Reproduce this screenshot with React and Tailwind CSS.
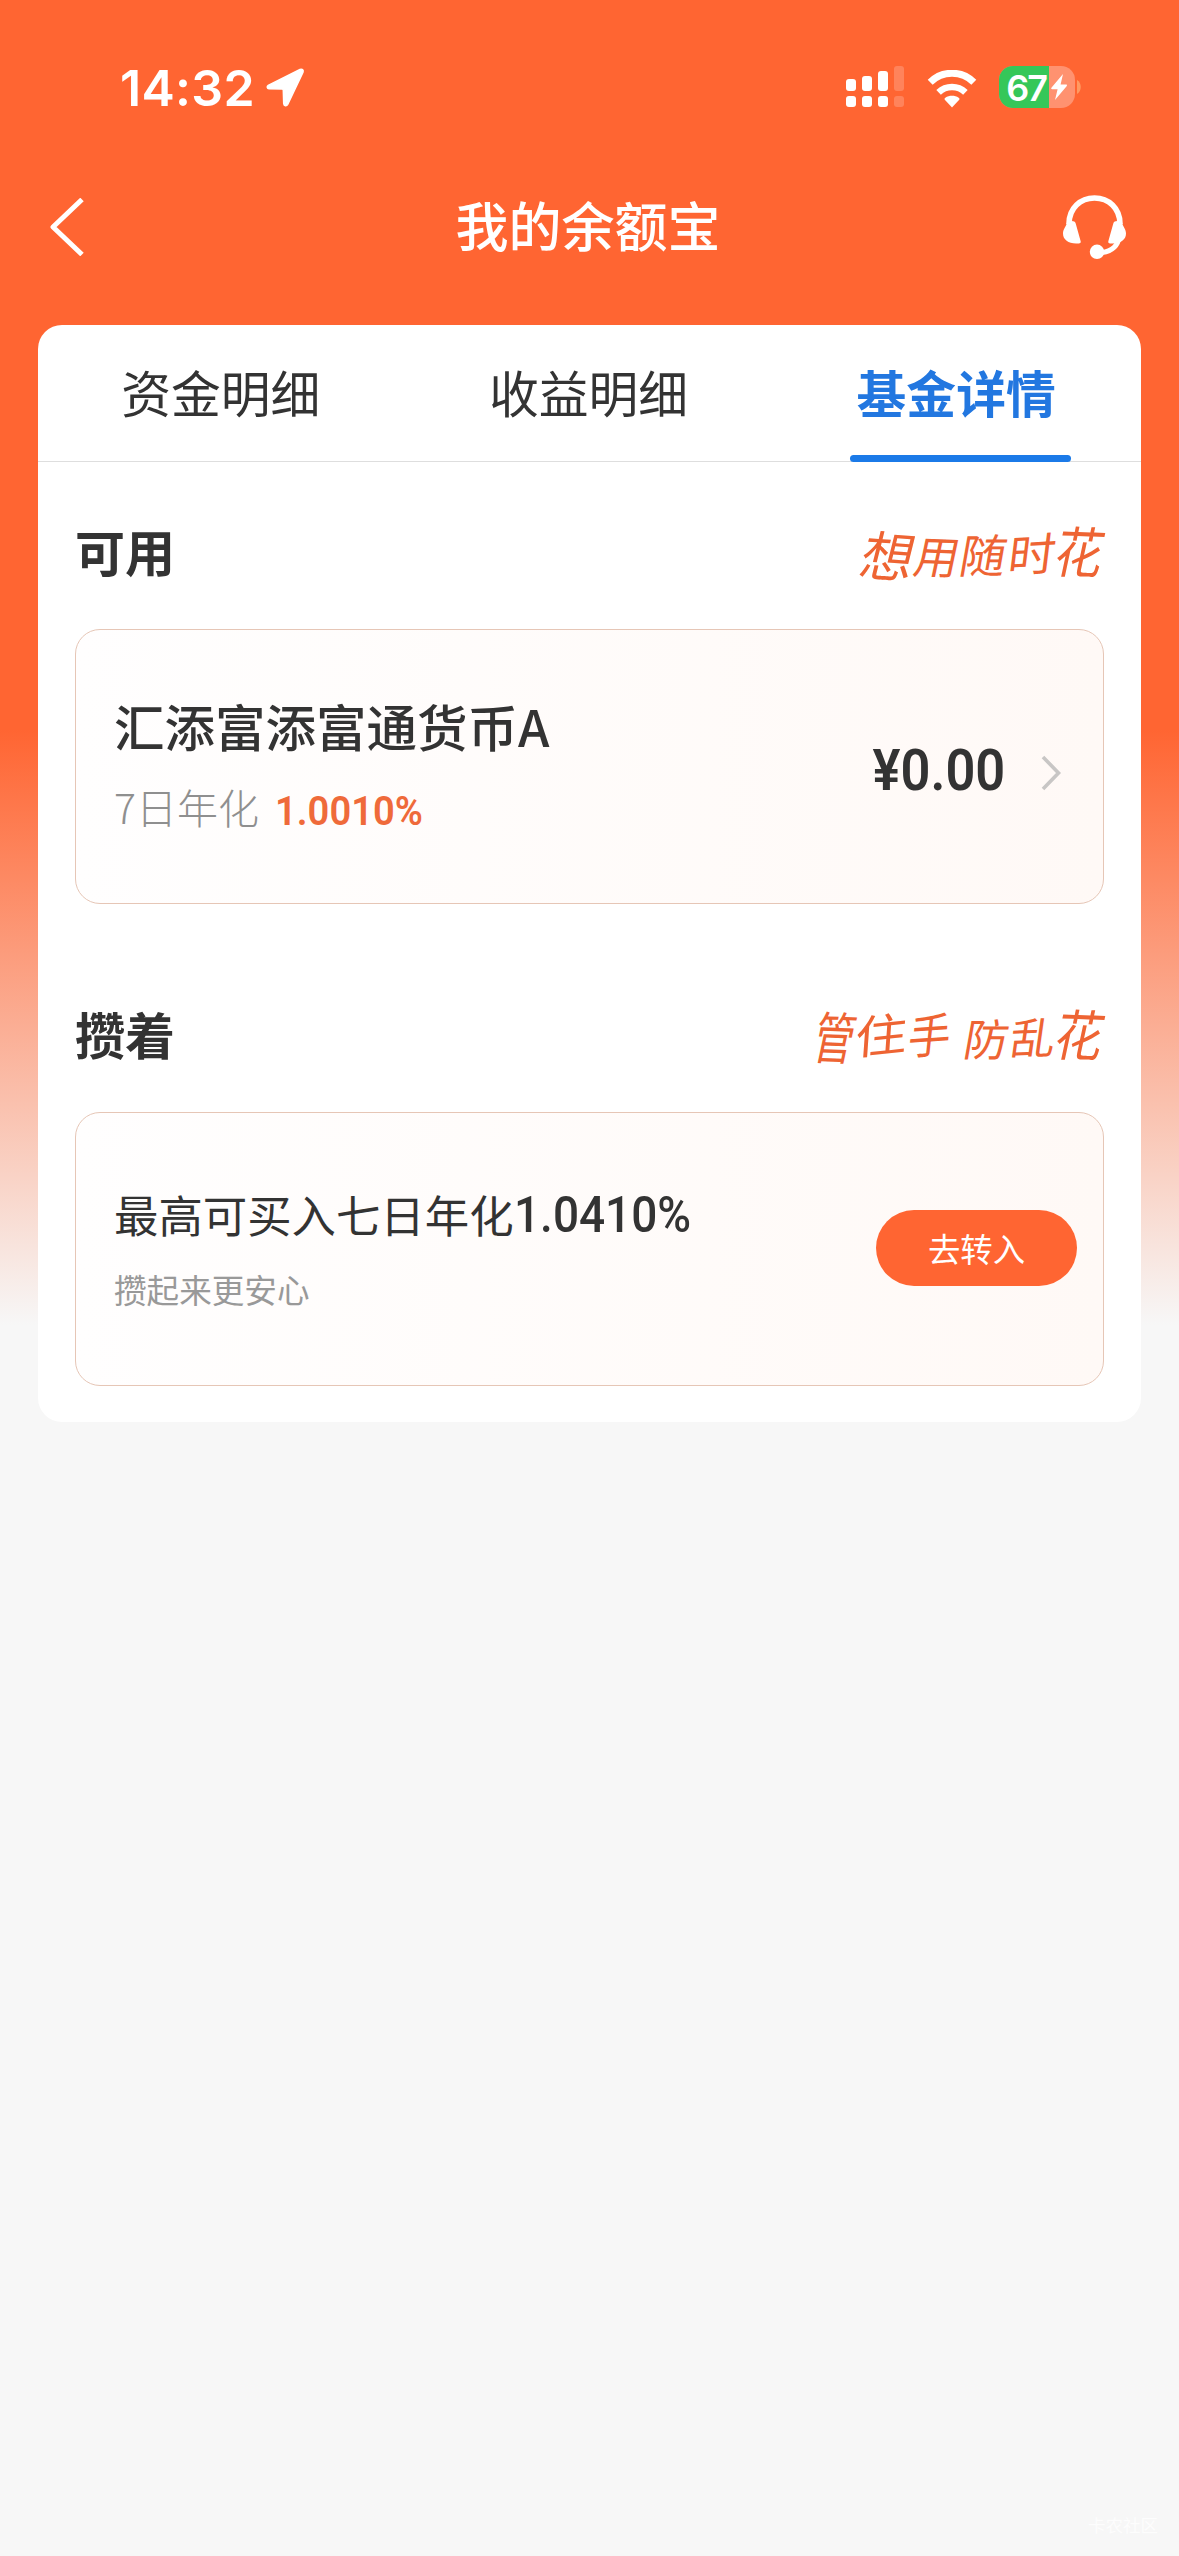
import React from "react";

const cjk = "font-['Noto_Sans_CJK_SC','Noto_Sans',sans-serif]";

function LocationArrow() {
  return (
    <svg width="40" height="41" viewBox="0 0 40 41" fill="#fff">
      <path
        d="M35 2.5 3.2 18.3C1.6 19.2 2 21.6 4 21.7L17.2 22.1C18 22.1 18.3 22.5 18.3 23.2L18.7 36.6C18.8 39.2 21.6 39.6 22.7 37.5L38 5.2C38.8 3 37 1.5 35 2.5Z"
        stroke="#fff"
        strokeWidth="1.5"
      />
    </svg>
  );
}

function Signal() {
  return (
    <svg width="60" height="44" viewBox="0 0 60 44" fill="#fff">
      <rect x="0" y="15" width="10" height="12" rx="3" />
      <rect x="16" y="12" width="10" height="15" rx="3" />
      <rect x="32" y="7" width="10" height="20" rx="3" />
      <rect x="48" y="2" width="10" height="25" rx="3" opacity=".2" />
      <rect x="0" y="32" width="10" height="11" rx="3" />
      <rect x="16" y="32" width="10" height="11" rx="3" />
      <rect x="32" y="32" width="10" height="11" rx="3" />
      <rect x="48" y="32" width="10" height="11" rx="3" opacity=".2" />
    </svg>
  );
}

function Wifi() {
  return (
    <svg width="50" height="38" viewBox="0 0 50 38" fill="none">
      <path d="M3.2 12.2A31 31 0 0 1 46.8 12.2" stroke="#fff" strokeWidth="7" />
      <path d="M11.6 22.3A19.5 19.5 0 0 1 38.4 22.3" stroke="#fff" strokeWidth="6.6" />
      <path d="M25 37.5 18 30C17.3 29.2 17.4 28.3 18.3 27.7 22.3 25.1 27.7 25.1 31.7 27.7 32.6 28.3 32.7 29.2 32 30Z" fill="#fff" />
    </svg>
  );
}

function Battery() {
  return (
    <div className="flex items-center">
      <div className="flex h-[42px] w-[76px] items-center overflow-hidden rounded-[14px] bg-[#ff9270]">
        <div className="flex h-full w-[50px] items-center justify-end bg-[#35c759] pr-[3px] pt-px font-['Inter',sans-serif] text-[36px] font-semibold leading-none tracking-[-2px] text-white">
          67
        </div>
        <svg width="20" height="28" viewBox="0 0 20 28" fill="#fff">
          <path d="M14 1 2.6 14.6C1.8 15.6 2.2 16.3 3.2 16.3H8.6L6 27 17.6 13.2C18.3 12.3 18 11.6 17 11.6H11.6Z" />
        </svg>
      </div>
      <svg className="ml-[2px]" width="4" height="14" viewBox="0 0 4 14">
        <path d="M0 0C5 3 5 11 0 14Z" fill="#ff9a62" />
      </svg>
    </div>
  );
}

function Headset() {
  return (
    <svg width="66" height="66" viewBox="0 0 66 66" fill="none">
      <path d="M7 30C7 14 18.5 4 32.5 4S58 14 58 30" stroke="#fff" strokeWidth="5.6" />
      <path d="M7 27.5C10 26.5 13 27 13.7 29.5L18.6 47C19.2 49.3 17.8 49.5 15.5 49.5 7 50 1 46 1 39.5 1 35 4 33 5 28.5Z" fill="#fff" />
      <path d="M58 27.5C55 26.5 52 27 51.3 29.5L46.4 47C45.8 49.3 47.2 49.5 49.5 49.5 58 50 64 46 64 39.5 64 35 61 33 60 28.5Z" fill="#fff" />
      <path d="M56.5 46C54 54.5 47 58.3 36 59" stroke="#fff" strokeWidth="5" />
      <circle cx="35" cy="57.8" r="7.2" fill="#fff" />
    </svg>
  );
}

function Slogan({ chars }) {
  return (
    <div className="flex h-[60px] items-start font-['Noto_Sans_CJK_SC',sans-serif] font-normal text-[#ee6433]">
      {chars.map(([ch, width, size, top, sx, rot], i) => (
        <span
          key={i}
          className="flex justify-center leading-none"
          style={{
            width,
            fontSize: size,
            marginTop: top,
            transform: `rotate(${rot}deg) skewX(-10deg) scaleX(${sx})`,
          }}
        >
          {ch}
        </span>
      ))}
    </div>
  );
}

function Tab({ label, active }) {
  return (
    <div
      className={
        active
          ? "relative flex flex-1 justify-center pr-[2px] pt-[29px] text-[49.8px] font-bold leading-[74px] text-[#2277e0]"
          : "flex flex-1 justify-center pr-[2px] pt-[29px] text-[49.8px] font-normal leading-[74px] text-[#333]"
      }
    >
      {label}
      {active && <span className="absolute -bottom-px left-[77px] h-[7px] w-[221px] rounded-full bg-[#1b7ae8]" />}
    </div>
  );
}

const cardBox =
  "flex justify-between rounded-[25px] border border-[#e6c6b6] bg-gradient-to-r from-[#fffefe] to-[#fff9f6]";

export default function App() {
  return (
    <div
      className={`${cjk} flex h-[2556px] w-[1179px] flex-col overflow-hidden bg-[#f7f7f7] bg-[linear-gradient(180deg,#ff6532_0px,#ff6532_730px,#f7f7f7_1325px)]`}
    >
      <header className="flex h-[325px] flex-col text-white">
        <div className="flex h-[108px] items-end justify-between pl-[120px] pr-[98px]">
          <div className="flex items-end">
            <span className="w-[145px] font-['Inter',sans-serif] text-[50px] font-semibold leading-[40px] tracking-[0.3px]">14:32</span>
            <LocationArrow />
          </div>
          <div className="flex items-end">
            <Signal />
            <div className="ml-[21px]"><Wifi /></div>
            <div className="ml-[22px]"><Battery /></div>
          </div>
        </div>
        <div className="mt-[79px] flex h-[80px] items-center justify-between pl-[48px] pr-[51px]">
          <svg width="80" height="58" viewBox="0 0 80 58" fill="none">
            <path d="M34 1.5 5 29 34 56.5" stroke="#fff" strokeWidth="5" strokeLinejoin="round" />
          </svg>
          <h1 className="pb-[5px] text-[53px] font-medium leading-[75px]">我的余额宝</h1>
          <div className="flex w-[80px] justify-end"><Headset /></div>
        </div>
      </header>

      <main className="mx-[38px] flex h-[1097px] flex-col rounded-[24px] bg-white">
        <nav className="flex h-[137px] border-b border-[#dedede]">
          <Tab label="资金明细" />
          <Tab label="收益明细" />
          <Tab label="基金详情" active />
        </nav>

        <section className="px-[37px]">
          <div className="flex h-[167px] items-start justify-between">
            <h2 className="pt-[51px] text-[50px] font-bold leading-[74px] text-[#333]">可用</h2>
            <div className="pt-[60px]">
              <Slogan
                chars={[
                  ["想", 54, 54, 5, 0.98, 4],
                  ["用", 44, 45, 10, 0.98, 2],
                  ["随", 48, 46, 8, 1, 0],
                  ["时", 49, 45, 7, 1.05, -3],
                  ["花", 47, 55, 0, 0.87, 2],
                ]}
              />
            </div>
          </div>
          <div className={`${cardBox} h-[275px]`}>
            <div className="pl-[38px] pt-[58px]">
              <div className="text-[50.5px] font-medium leading-[74px] text-[#333]">汇添富添富通货币A</div>
              <div className="mt-[14px] flex items-start leading-[60px]">
                <span className="text-[41px] font-light text-[#8f8f8f]">7日年化</span>
                <span className="ml-[16px] flex w-[148px] pt-[5px] font-['Roboto',sans-serif] text-[41px] font-semibold text-[#ef6a3a]">
                  <span className="origin-left scale-x-[0.93]">1.0010%</span>
                </span>
              </div>
            </div>
            <div className="flex items-center pr-[41px] pt-[7px]">
              <span className="origin-right scale-x-[0.92] font-['Roboto',sans-serif] text-[57px] font-semibold leading-none text-[#333]">¥0.00</span>
              <svg className="ml-[35px] mt-[5px]" width="22" height="36" viewBox="0 0 22 36" fill="none">
                <path d="M3 2 18.5 18 3 34" stroke="#c8c6c5" strokeWidth="3.6" />
              </svg>
            </div>
          </div>
        </section>

        <section className="px-[37px]">
          <div className="flex h-[208px] items-start justify-between">
            <h2 className="pt-[92px] text-[50px] font-bold leading-[74px] text-[#333]">攒着</h2>
            <div className="pt-[101px]">
              <Slogan
                chars={[
                  ["管", 37, 56, 2, 0.72, 2],
                  ["住", 55, 45, 5, 1.15, -6],
                  ["手", 42, 47, 4, 0.9, -4],
                  ["", 13, 40, 0, 1, 0],
                  ["防", 46, 44, 10, 1, 0],
                  ["乱", 47, 43, 9, 1.05, -2],
                  ["花", 47, 55, 0, 0.87, 2],
                ]}
              />
            </div>
          </div>
          <div className={`${cardBox} h-[274px]`}>
            <div className="pl-[38px] pt-[67px]">
              <div className="flex items-baseline text-[44.4px] leading-[68px] text-[#333]">
                <span>最高可买入七日年化</span>
                <span className="w-[176px] font-['Roboto',sans-serif] text-[50.5px] font-medium">
                  <span className="inline-block origin-left -translate-y-px scale-x-[0.91]">1.0410%</span>
                </span>
              </div>
              <div className="mt-[15px] text-[32.6px] font-normal leading-[48px] text-[#999]">攒起来更安心</div>
            </div>
            <button className="mr-[26px] mt-[97px] h-[76px] w-[201px] rounded-full bg-[#ff6532] text-[32.4px] font-normal leading-[72px] text-white">
              去转入
            </button>
          </div>
        </section>
      </main>

      <footer className="mt-auto flex justify-end pb-[18px] pr-[21px] text-[17.5px] leading-[26px] text-[#fdfdfd]">卡农社区</footer>
    </div>
  );
}
